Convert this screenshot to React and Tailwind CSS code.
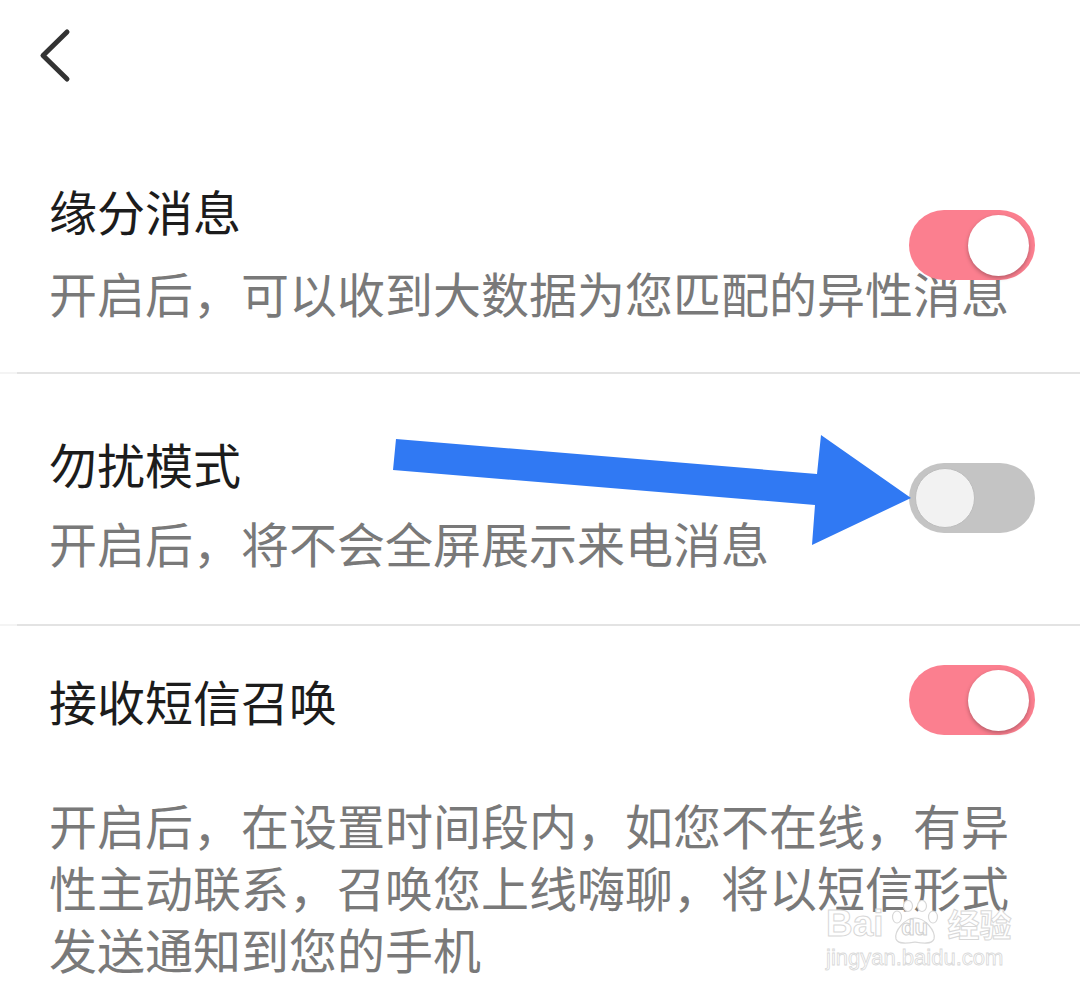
import React from "react";

const font = { fontFamily: '"Noto Sans CJK SC", "Noto Sans", sans-serif' };

function Toggle({ on, className }) {
  if (on) {
    return (
      <div className={"w-[126px] h-[70px] rounded-full bg-[#fb7f8f] flex items-center justify-end pr-[6px] " + className}>
        <div className="w-[61px] h-[61px] rounded-full bg-white shadow-[0_2px_4px_rgba(0,0,0,0.28)]" />
      </div>
    );
  }
  return (
    <div className={"w-[126px] h-[70px] rounded-full bg-[#c4c4c4] flex items-center justify-start pl-[6px] " + className}>
      <div className="w-[60px] h-[60px] rounded-full bg-[#f2f2f2] border border-[#bdbdbd]" />
    </div>
  );
}

function Divider() {
  return (
    <div className="flex h-[2px]">
      <div className="w-[17px] bg-[#f4f4f4]" />
      <div className="flex-1 bg-[#e3e3e3]" />
    </div>
  );
}

export default function App() {
  return (
    <div className="relative w-[1080px] h-[996px] bg-white overflow-hidden" style={font}>
      {/* header */}
      <div className="h-[120px] pl-[38px] pt-[28px]">
        <svg width="36" height="56" viewBox="0 0 36 56" fill="none">
          <path d="M29 4 L5 27.5 L29 51" stroke="#333333" strokeWidth="5" strokeLinecap="round" strokeLinejoin="round" />
        </svg>
      </div>

      {/* row 1 */}
      <div className="relative pl-[49px] pr-[50px] pt-[59px] h-[252px]">
        <div className="text-[48px] leading-[62px] text-[#1c1c1c]">缘分消息</div>
        <div className="mt-[20px] text-[48px] leading-[62px] text-[#797979] whitespace-nowrap">开启后，可以收到大数据为您匹配的异性消息</div>
        <Toggle on className="absolute right-[45px] top-[90px]" />
      </div>
      <Divider />

      {/* row 2 */}
      <div className="relative pl-[49px] pr-[50px] pt-[58px] h-[250px]">
        <div className="text-[48px] leading-[62px] text-[#1c1c1c]">勿扰模式</div>
        <div className="mt-[17px] text-[48px] leading-[62px] text-[#797979] whitespace-nowrap">开启后，将不会全屏展示来电消息</div>
        <Toggle on={false} className="absolute right-[45px] top-[89px]" />
      </div>
      <Divider />

      {/* row 3 */}
      <div className="relative pl-[49px] pr-[50px] pt-[43px]">
        <div className="text-[48px] leading-[62px] text-[#1c1c1c]">接收短信召唤</div>
        <div className="mt-[62px] text-[48px] leading-[62px] text-[#797979] whitespace-nowrap">
          开启后，在设置时间段内，如您不在线，有异
          <br />
          性主动联系，召唤您上线嗨聊，将以短信形式
          <br />
          发送通知到您的手机
        </div>
        <Toggle on className="absolute right-[45px] top-[39px]" />
      </div>

      {/* blue arrow annotation */}
      <svg className="absolute left-0 top-0 pointer-events-none" width="1080" height="996" viewBox="0 0 1080 996">
        <polygon
          points="396,439 817,474 821,435 911,498 812,545 815,505 393,470"
          fill="#3079f3"
        />
      </svg>

      {/* Baidu watermark */}
      <div className="absolute left-[826px] top-[900px] flex flex-col items-start pointer-events-none select-none">
        <div className="flex items-center h-[46px]">
          <span
            className="text-[37px] leading-none font-bold text-white [-webkit-text-stroke:1px_#d8d8d8]"
            style={{ fontFamily: '"Liberation Sans", Arial, sans-serif' }}
          >
            Bai
          </span>
          <span className="relative ml-[4px] w-[54px] h-[46px] flex items-end justify-center">
            <svg className="absolute left-0 top-0" width="54" height="46" viewBox="0 0 54 46" fill="white" stroke="#d8d8d8" strokeWidth="1.2">
              <ellipse cx="9" cy="17" rx="4.5" ry="6" />
              <ellipse cx="20" cy="6" rx="4.5" ry="5.5" />
              <ellipse cx="34" cy="6" rx="4.5" ry="5.5" />
              <ellipse cx="45" cy="17" rx="4.5" ry="6" />
              <path d="M27 18 C17 18 6 31 8 39 C10 45 21 43 27 42 C33 43 44 45 46 39 C48 31 37 18 27 18 Z" />
            </svg>
            <span
              className="relative text-[22px] leading-none font-bold text-white [-webkit-text-stroke:1px_#d0d0d0] mb-[7px]"
              style={{ fontFamily: '"Liberation Sans", Arial, sans-serif' }}
            >
              du
            </span>
          </span>
          <span className="ml-[6px] text-[32px] leading-none font-bold text-white [-webkit-text-stroke:1px_#d8d8d8]">经验</span>
        </div>
        <div
          className="mt-[1px] text-[22px] leading-none text-white [-webkit-text-stroke:0.8px_#d8d8d8]"
          style={{ fontFamily: '"Liberation Sans", Arial, sans-serif' }}
        >
          jingyan.baidu.com
        </div>
      </div>
    </div>
  );
}
